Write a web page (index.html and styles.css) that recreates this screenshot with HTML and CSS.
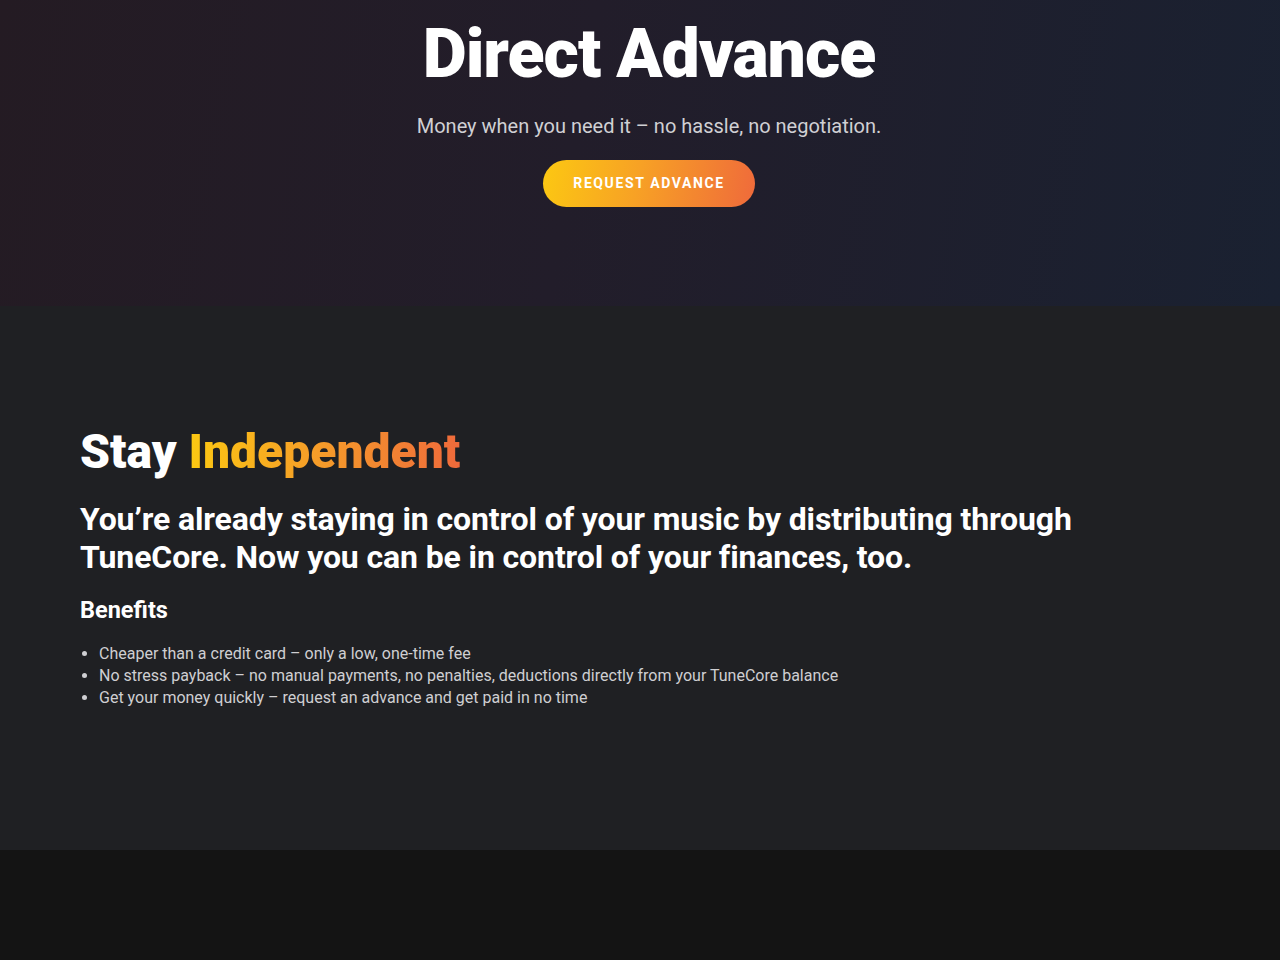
FILE: index.html
```html
<!DOCTYPE html>
<html lang="en">
<head>
<meta charset="utf-8">
<title>Direct Advance</title>
<link rel="stylesheet" href="styles.css">
</head>
<body>
<section class="hero">
  <h1 class="hero-title">Direct Advance</h1>
  <p class="hero-sub">Money when you need it – no hassle, no negotiation.</p>
  <a class="btn" href="#">Request Advance</a>
</section>
<section class="info">
  <h2 class="info-title">Stay <span class="grad">Independent</span></h2>
  <p class="info-lead">You’re already staying in control of your music by distributing through TuneCore. Now you can be in control of your finances, too.</p>
  <h3 class="info-sub">Benefits</h3>
  <ul class="benefits">
    <li>Cheaper than a credit card – only a low, one-time fee</li>
    <li>No stress payback – no manual payments, no penalties, deductions directly from your TuneCore balance</li>
    <li>Get your money quickly – request an advance and get paid in no time</li>
  </ul>
</section>
<footer class="footer"></footer>
</body>
</html>
```

FILE: styles.css
```css
* { box-sizing: border-box; }
html, body { margin: 0; padding: 0; }
body {
  background: #141414;
  font-family: Roboto, "Liberation Sans", Arial, sans-serif;
  color: #fff;
}
.hero {
  height: 306px;
  display: flex;
  flex-direction: column;
  align-items: center;
  background: linear-gradient(100deg, #241b23 0%, #221d2a 45%, #1a2131 100%);
  padding-top: 14px;
  padding-left: 18px;
}
.hero-title {
  margin: 0;
  font-size: 68px;
  font-weight: 900;
  line-height: 80px;
  letter-spacing: -1px;
}
.hero-sub {
  margin: 20px 0 0;
  font-size: 20px;
  font-weight: 400;
  color: #d0d0d4;
  line-height: 24px;
}
.btn {
  margin-top: 22px;
  display: inline-flex;
  align-items: center;
  justify-content: center;
  width: 212px;
  height: 47px;
  padding-bottom: 2px;
  border-radius: 24px;
  background: linear-gradient(100deg, #fcc812 0%, #f7a125 45%, #ef6a3b 100%);
  color: #fff;
  font-size: 14px;
  font-weight: 700;
  letter-spacing: 1.6px;
  text-transform: uppercase;
  text-decoration: none;
}
.info {
  background: #1f2023;
  height: 544px;
  padding: 116px 80px 0;
}
.info-title {
  margin: 0;
  font-size: 48px;
  font-weight: 900;
  line-height: 60px;
  letter-spacing: 0;
}
.grad {
  background: linear-gradient(90deg, #fcc812 0%, #f59a2a 50%, #ef6a3b 100%);
  -webkit-background-clip: text;
  background-clip: text;
  color: transparent;
}
.info-lead {
  margin: 18px 0 0;
  font-size: 32px;
  font-weight: 700;
  line-height: 38px;
  letter-spacing: -0.12px;
  max-width: 1020px;
}
.info-sub {
  margin: 20px 0 0;
  font-size: 23.5px;
  font-weight: 700;
  line-height: 28px;
}
.benefits {
  margin: 19px 0 0;
  padding-left: 19px;
  font-size: 16px;
  font-weight: 400;
  line-height: 22px;
  color: #cfcfd2;
}
.footer {
  height: 110px;
  background: #141414;
}
```
